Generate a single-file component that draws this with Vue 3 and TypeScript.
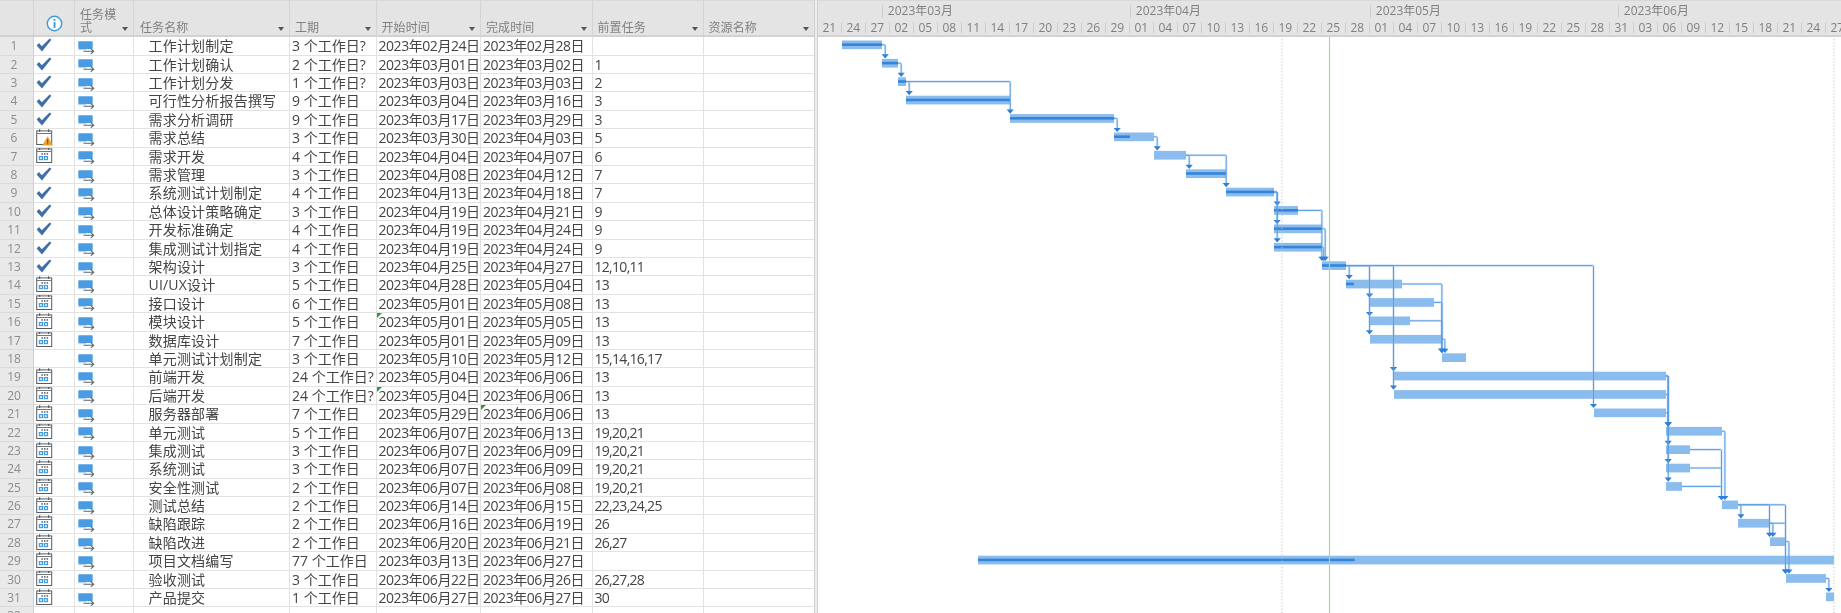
<script setup lang="ts">
type Icon = 'check' | 'warn' | 'cal' | ''
interface Task { name: string; dur: string; start: string; end: string; pred: string; icon: Icon; s: string; e: string; prog: number; mark?: 'start' | 'end' }

const t = (icon: Icon, name: string, dur: string, s: string, e: string, pred: string, prog: number, mark?: 'start' | 'end'): Task => {
  const fmt = (d: string) => `2023年${d.slice(0, 2)}月${d.slice(3)}日`
  return { name, dur, start: fmt(s), end: fmt(e), pred, icon, s, e, prog, mark }
}

const tasks: Task[] = [
  t('check', '工作计划制定', '3 个工作日?', '02-24', '02-28', '', 1),
  t('check', '工作计划确认', '2 个工作日?', '03-01', '03-02', '1', 1),
  t('check', '工作计划分发', '1 个工作日?', '03-03', '03-03', '2', 1),
  t('check', '可行性分析报告撰写', '9 个工作日', '03-04', '03-16', '3', 1),
  t('check', '需求分析调研', '9 个工作日', '03-17', '03-29', '3', 1),
  t('warn', '需求总结', '3 个工作日', '03-30', '04-03', '5', 0.4),
  t('cal', '需求开发', '4 个工作日', '04-04', '04-07', '6', 0),
  t('check', '需求管理', '3 个工作日', '04-08', '04-12', '7', 1),
  t('check', '系统测试计划制定', '4 个工作日', '04-13', '04-18', '7', 1),
  t('check', '总体设计策略确定', '3 个工作日', '04-19', '04-21', '9', 1),
  t('check', '开发标准确定', '4 个工作日', '04-19', '04-24', '9', 1),
  t('check', '集成测试计划指定', '4 个工作日', '04-19', '04-24', '9', 1),
  t('check', '架构设计', '3 个工作日', '04-25', '04-27', '12,10,11', 1),
  t('cal', 'UI/UX设计', '5 个工作日', '04-28', '05-04', '13', 0.14),
  t('cal', '接口设计', '6 个工作日', '05-01', '05-08', '13', 0),
  t('cal', '模块设计', '5 个工作日', '05-01', '05-05', '13', 0, 'start'),
  t('cal', '数据库设计', '7 个工作日', '05-01', '05-09', '13', 0),
  t('', '单元测试计划制定', '3 个工作日', '05-10', '05-12', '15,14,16,17', 0),
  t('cal', '前端开发', '24 个工作日?', '05-04', '06-06', '13', 0),
  t('cal', '后端开发', '24 个工作日?', '05-04', '06-06', '13', 0, 'start'),
  t('cal', '服务器部署', '7 个工作日', '05-29', '06-06', '13', 0, 'end'),
  t('cal', '单元测试', '5 个工作日', '06-07', '06-13', '19,20,21', 0),
  t('cal', '集成测试', '3 个工作日', '06-07', '06-09', '19,20,21', 0),
  t('cal', '系统测试', '3 个工作日', '06-07', '06-09', '19,20,21', 0),
  t('cal', '安全性测试', '2 个工作日', '06-07', '06-08', '19,20,21', 0),
  t('cal', '测试总结', '2 个工作日', '06-14', '06-15', '22,23,24,25', 0),
  t('cal', '缺陷跟踪', '2 个工作日', '06-16', '06-19', '26', 0),
  t('cal', '缺陷改进', '2 个工作日', '06-20', '06-21', '26,27', 0),
  t('cal', '项目文档编写', '77 个工作日', '03-13', '06-27', '', 0.44),
  t('cal', '验收测试', '3 个工作日', '06-22', '06-26', '26,27,28', 0),
  t('cal', '产品提交', '1 个工作日', '06-27', '06-27', '30', 0),
]

// Gantt scale: one day is 8px and the chart opens on 21 Feb.
const DAY = 8
const ROW = 18.4
const cum: Record<string, number> = { '02': 0, '03': 8, '04': 39, '05': 69, '06': 100, '07': 130 }
const dayIndex = (d: string) => cum[d.slice(0, 2)] + Number(d.slice(3)) - (d.startsWith('02') ? 21 : 1)
const xOf = (d: string) => dayIndex(d) * DAY

const rowTop = (n: number) => (n - 1) * ROW
const midY = (n: number) => rowTop(n) + 7.8

const bars = tasks.map((k, i) => {
  const x = xOf(k.s)
  const w = (dayIndex(k.e) + 1 - dayIndex(k.s)) * DAY
  return { x, w, y: rowTop(i + 1) + 3.5, pw: w * k.prog, py: midY(i + 1) - 1.4 }
})

// from row, to row, absolute screen x of the vertical run
const links: [number, number, number][] = [
  [1, 2, 885], [2, 3, 901], [3, 4, 909], [3, 5, 1010], [5, 6, 1117], [6, 7, 1157], [7, 8, 1189], [7, 9, 1226],
  [9, 10, 1277], [9, 11, 1277], [9, 12, 1277], [10, 13, 1321.7], [11, 13, 1325], [12, 13, 1323.5],
  [13, 14, 1349], [13, 15, 1369.3], [13, 16, 1369.3], [13, 17, 1369.3], [13, 19, 1393.3], [13, 20, 1393.3], [13, 21, 1593.3],
  [14, 18, 1441.7], [15, 18, 1441.7], [16, 18, 1441.7], [17, 18, 1444.7],
  [19, 22, 1668], [19, 23, 1668], [19, 24, 1668], [19, 25, 1668], [20, 22, 1668], [21, 22, 1668],
  [22, 26, 1724.7], [23, 26, 1721.3], [24, 26, 1721.3], [25, 26, 1721.3],
  [26, 27, 1740.7], [26, 28, 1769.3], [26, 30, 1785.3], [27, 28, 1772.7], [27, 30, 1785.3], [28, 30, 1788.7], [30, 31, 1828.7],
]
const ORIGIN = 817.8
const linkPaths = links.map(([a, b, ax]) => {
  const x0 = bars[a - 1].x + bars[a - 1].w
  const x = ax - ORIGIN
  const y0 = midY(a)
  const y1 = bars[b - 1].y - 4
  return {
    d: `M${x0.toFixed(1)} ${y0.toFixed(1)}H${(x - 1).toFixed(1)}Q${x.toFixed(1)} ${y0.toFixed(1)} ${x.toFixed(1)} ${(y0 + 1).toFixed(1)}V${y1.toFixed(1)}`,
    arrow: `${(x - 3.6).toFixed(1)},${(y1 - 0.6).toFixed(1)} ${(x + 3.6).toFixed(1)},${(y1 - 0.6).toFixed(1)} ${x.toFixed(1)},${(y1 + 3.6).toFixed(1)}`,
  }
})

const days: string[] = []
for (let i = 0; i < 43; i++) {
  const n = i * 3
  let label: number
  if (n < 8) label = 21 + n
  else if (n < 39) label = n - 8 + 1
  else if (n < 69) label = n - 39 + 1
  else if (n < 100) label = n - 69 + 1
  else label = n - 100 + 1
  days.push(String(label).padStart(2, '0'))
}
const months = ['2023年03月', '2023年04月', '2023年05月', '2023年06月']
const monthWidths = [31, 30, 31, 30].map(d => d * DAY)
const rowNums = Array.from({ length: 32 }, (_, i) => i + 1)
const columns = ['任务模式', '任务名称', '工期', '开始时间', '完成时间', '前置任务', '资源名称']
</script>

<template>
  <div class="app">
    <section class="sheet">
      <div class="row head">
        <div class="c num"></div>
        <div class="c info">
          <svg width="17" height="17" viewBox="0 0 17 17"><circle cx="8.5" cy="8.5" r="7.2" fill="#fff" stroke="#3b9de0" stroke-width="1.4" /><rect x="7.6" y="7" width="1.9" height="6" fill="#3b9de0" /><rect x="7.6" y="3.9" width="1.9" height="1.9" fill="#3b9de0" /></svg>
        </div>
        <div v-for="(h, i) in columns" :key="h" class="c hcell" :class="`col${i}`">
          <span class="htext">{{ h }}</span>
          <i class="drop"></i>
        </div>
      </div>
      <div v-for="n in rowNums" :key="n" class="row">
        <div class="c num">{{ n }}</div>
        <template v-if="tasks[n - 1]">
          <div class="c ind">
            <svg v-if="tasks[n - 1].icon === 'check'" width="16" height="14" viewBox="0 0 16 14"><path d="M.6 7.4 L3 5 L5.8 8.2 L13.6 .4 L15.4 1.8 L6 13.4 Z" fill="#3f6fa8" /></svg>
            <svg v-else-if="tasks[n - 1].icon" width="17" height="17" viewBox="0 0 17 17">
              <rect x=".7" y="1.9" width="15" height="13.6" fill="#fff" stroke="#555c63" />
              <rect x="1" y="4" width="14.4" height="1" fill="#6f767d" />
              <rect x="3" y=".3" width="1.2" height="2.6" fill="#555c63" /><rect x="12" y=".3" width="1.2" height="2.6" fill="#555c63" />
              <template v-if="tasks[n - 1].icon === 'cal'">
                <rect x="5.4" y="6.2" width="1.5" height="1.5" fill="#555c63" /><rect x="8" y="6.2" width="1.5" height="1.5" fill="#555c63" /><rect x="10.6" y="6.2" width="1.5" height="1.5" fill="#555c63" />
                <rect x="2.8" y="9" width="4.3" height="4.2" fill="#3c9be2" /><rect x="7.8" y="9" width="4.3" height="4.2" fill="#3c9be2" />
                <rect x="3.9" y="10.1" width="2.1" height="2" fill="#cfe6f8" /><rect x="8.9" y="10.1" width="2.1" height="2" fill="#cfe6f8" />
              </template>
              <template v-else>
                <path d="M11.6 7.2 L17 16.6 H6.2 Z" fill="#f0a030" /><rect x="11.1" y="10.2" width="1.1" height="3.4" fill="#7a4a10" /><rect x="11.1" y="14.2" width="1.1" height="1.1" fill="#7a4a10" />
              </template>
            </svg>
          </div>
          <div class="c mode">
            <svg width="17" height="13" viewBox="0 0 17 13"><rect x=".3" y=".2" width="14.4" height="7.8" rx=".8" fill="#4a9be2" /><rect x=".3" y="8" width="8" height="1.2" fill="#b4d4ef" /><path d="M5.5 10.2 H15.5 M12.8 7.6 L15.7 10.2 L12.8 12.8" fill="none" stroke="#5d6670" stroke-width="1.1" /></svg>
          </div>
          <div class="c name">{{ tasks[n - 1].name }}</div>
          <div class="c dur">{{ tasks[n - 1].dur }}</div>
          <div class="c date start" :class="{ flagged: tasks[n - 1].mark === 'start' }">{{ tasks[n - 1].start }}</div>
          <div class="c date end" :class="{ flagged: tasks[n - 1].mark === 'end' }">{{ tasks[n - 1].end }}</div>
          <div class="c pred">{{ tasks[n - 1].pred }}</div>
          <div class="c res"></div>
        </template>
        <template v-else>
          <div class="c ind"></div><div class="c mode"></div><div class="c name"></div><div class="c dur"></div>
          <div class="c date start"></div><div class="c date end"></div><div class="c pred"></div><div class="c res"></div>
        </template>
      </div>
    </section>

    <div class="split"></div>

    <section class="gantt">
      <header class="ghead">
        <div class="months">
          <span class="lead"></span>
          <span v-for="(m, i) in months" :key="m" class="month" :style="{ width: monthWidths[i] + 'px' }">{{ m }}</span>
        </div>
        <div class="days">
          <span v-for="(d, i) in days" :key="i" class="day">{{ d }}</span>
        </div>
      </header>
      <svg class="chart" width="1024" height="576" viewBox="0 0 1024 576">
        <g v-for="(l, i) in linkPaths" :key="i">
          <path :d="l.d" fill="none" stroke="#dbe9f8" stroke-width="2.6" />
        </g>
        <g v-for="(b, i) in bars" :key="i">
          <rect :x="b.x" :y="b.y" :width="b.w" height="8.7" fill="#8bbcee" />
          <rect v-if="b.pw" :x="b.x" :y="b.py" :width="b.pw" height="2.6" fill="#3584da" />
        </g>
        <g v-for="(l, i) in linkPaths" :key="'k' + i">
          <path :d="l.d" fill="none" stroke="#5a9de2" stroke-width="1" />
          <polygon :points="l.arrow" fill="#2f80d8" />
        </g>
        <line x1="464" y1="2" x2="464" y2="576" stroke="#c4c4c4" stroke-dasharray="1.2 2" />
        <line x1="1016" y1="2" x2="1016" y2="576" stroke="#c4c4c4" stroke-dasharray="1.2 2" />
        <line x1="511.5" y1="0" x2="511.5" y2="576" stroke="#a9d6a0" stroke-width="1.2" />
      </svg>
    </section>
  </div>
</template>

<style scoped>
.app {
  display: flex;
  width: 1841px;
  height: 613px;
  overflow: hidden;
  background: #fff;
  font-family: "Open Sans", "Noto Sans CJK SC", sans-serif;
  color: #444;
  filter: blur(0.35px);
}
.sheet {
  width: 814px;
  flex: none;
  height: 613px;
  overflow: hidden;
}
.row {
  display: grid;
  grid-template-columns: 34px 41px 59px 156px 86.5px 104.5px 111.5px 111px 111px;
  height: 18.4px;
  box-sizing: border-box;
  font-size: 14px;
  line-height: 17.6px;
}
.head {
  height: 37.3px;
  background: #e4e4e4;
  border-top: 1px solid #d8d8d8;
  border-bottom: 2px solid #d2d2d2;
  color: #808080;
  font-size: 12px;
}
.c {
  box-sizing: border-box;
  border-right: 1px solid #e2e2e2;
  border-bottom: 1px solid #e2e2e2;
  white-space: nowrap;
  overflow: hidden;
  min-width: 0;
}
.head .c {
  border-bottom: 0;
  border-right: 1px solid #d4d4d4;
}
.num {
  background: #e9e9e9;
  color: #8c8c8c;
  font-size: 12px;
  text-align: center;
  border-right: 1px solid #cfcfcf;
  border-bottom: 1px solid #dadada;
  padding-right: 5px;
}
.head .num {
  background: transparent;
  border-right-color: #d4d4d4;
}
.info {
  display: flex;
  align-items: center;
  justify-content: center;
  padding-top: 10px;
}
.hcell {
  display: flex;
  align-items: flex-end;
  justify-content: space-between;
  padding: 0 5px 1px 5px;
  white-space: normal;
}
.htext {
  line-height: 13px;
  letter-spacing: 0.1px;
}
.col0 .htext {
  width: 38px;
}
.col1 {
  padding-left: 6px;
}
.col2 .htext { letter-spacing: 0; }
.drop {
  flex: none;
  width: 0;
  height: 0;
  border: 3.5px solid transparent;
  border-top: 4px solid #555;
  border-bottom: 0;
  margin-bottom: 3px;
}
.ind {
  display: flex;
  align-items: center;
  padding: 0 0 1px 2px;
}
.mode {
  display: flex;
  align-items: center;
  padding: 3px 0 0 3px;
}
.name {
  padding-left: 14.5px;
  letter-spacing: 0.2px;
}
.dur {
  padding-left: 2px;
}
.date {
  padding-left: 2px;
  letter-spacing: -0.45px;
  position: relative;
}
.flagged::before {
  content: "";
  position: absolute;
  left: 0;
  top: 0;
  border-top: 5.5px solid #2a9a3c;
  border-right: 5.5px solid transparent;
}
.pred {
  padding-left: 2px;
  letter-spacing: -0.7px;
}
.split {
  flex: none;
  width: 3.8px;
  background: #ededed;
  border-left: 1px solid #cfcfcf;
  border-right: 1px solid #cfcfcf;
  box-sizing: border-box;
}
.gantt {
  flex: 1;
  min-width: 0;
  overflow: hidden;
  display: flex;
  flex-direction: column;
}
.ghead {
  flex: none;
  height: 37.3px;
  box-sizing: border-box;
  background: #e4e4e4;
  border-top: 1px solid #d8d8d8;
  border-bottom: 2px solid #d2d2d2;
  color: #808080;
  font-size: 12px;
  overflow: hidden;
}
.months {
  display: flex;
  height: 17px;
  align-items: stretch;
  padding-top: 4px;
  box-sizing: border-box;
}
.lead {
  flex: none;
  width: 64px;
}
.month {
  flex: none;
  box-sizing: border-box;
  border-left: 1px solid #cdcdcd;
  padding-left: 5px;
  line-height: 12px;
  white-space: nowrap;
}
.days {
  display: flex;
  margin-top: 4px;
  height: 11px;
}
.day {
  flex: none;
  width: 24px;
  box-sizing: border-box;
  border-right: 1px solid #cdcdcd;
  text-align: center;
  line-height: 11px;
}
.chart {
  display: block;
  flex: none;
}
</style>
